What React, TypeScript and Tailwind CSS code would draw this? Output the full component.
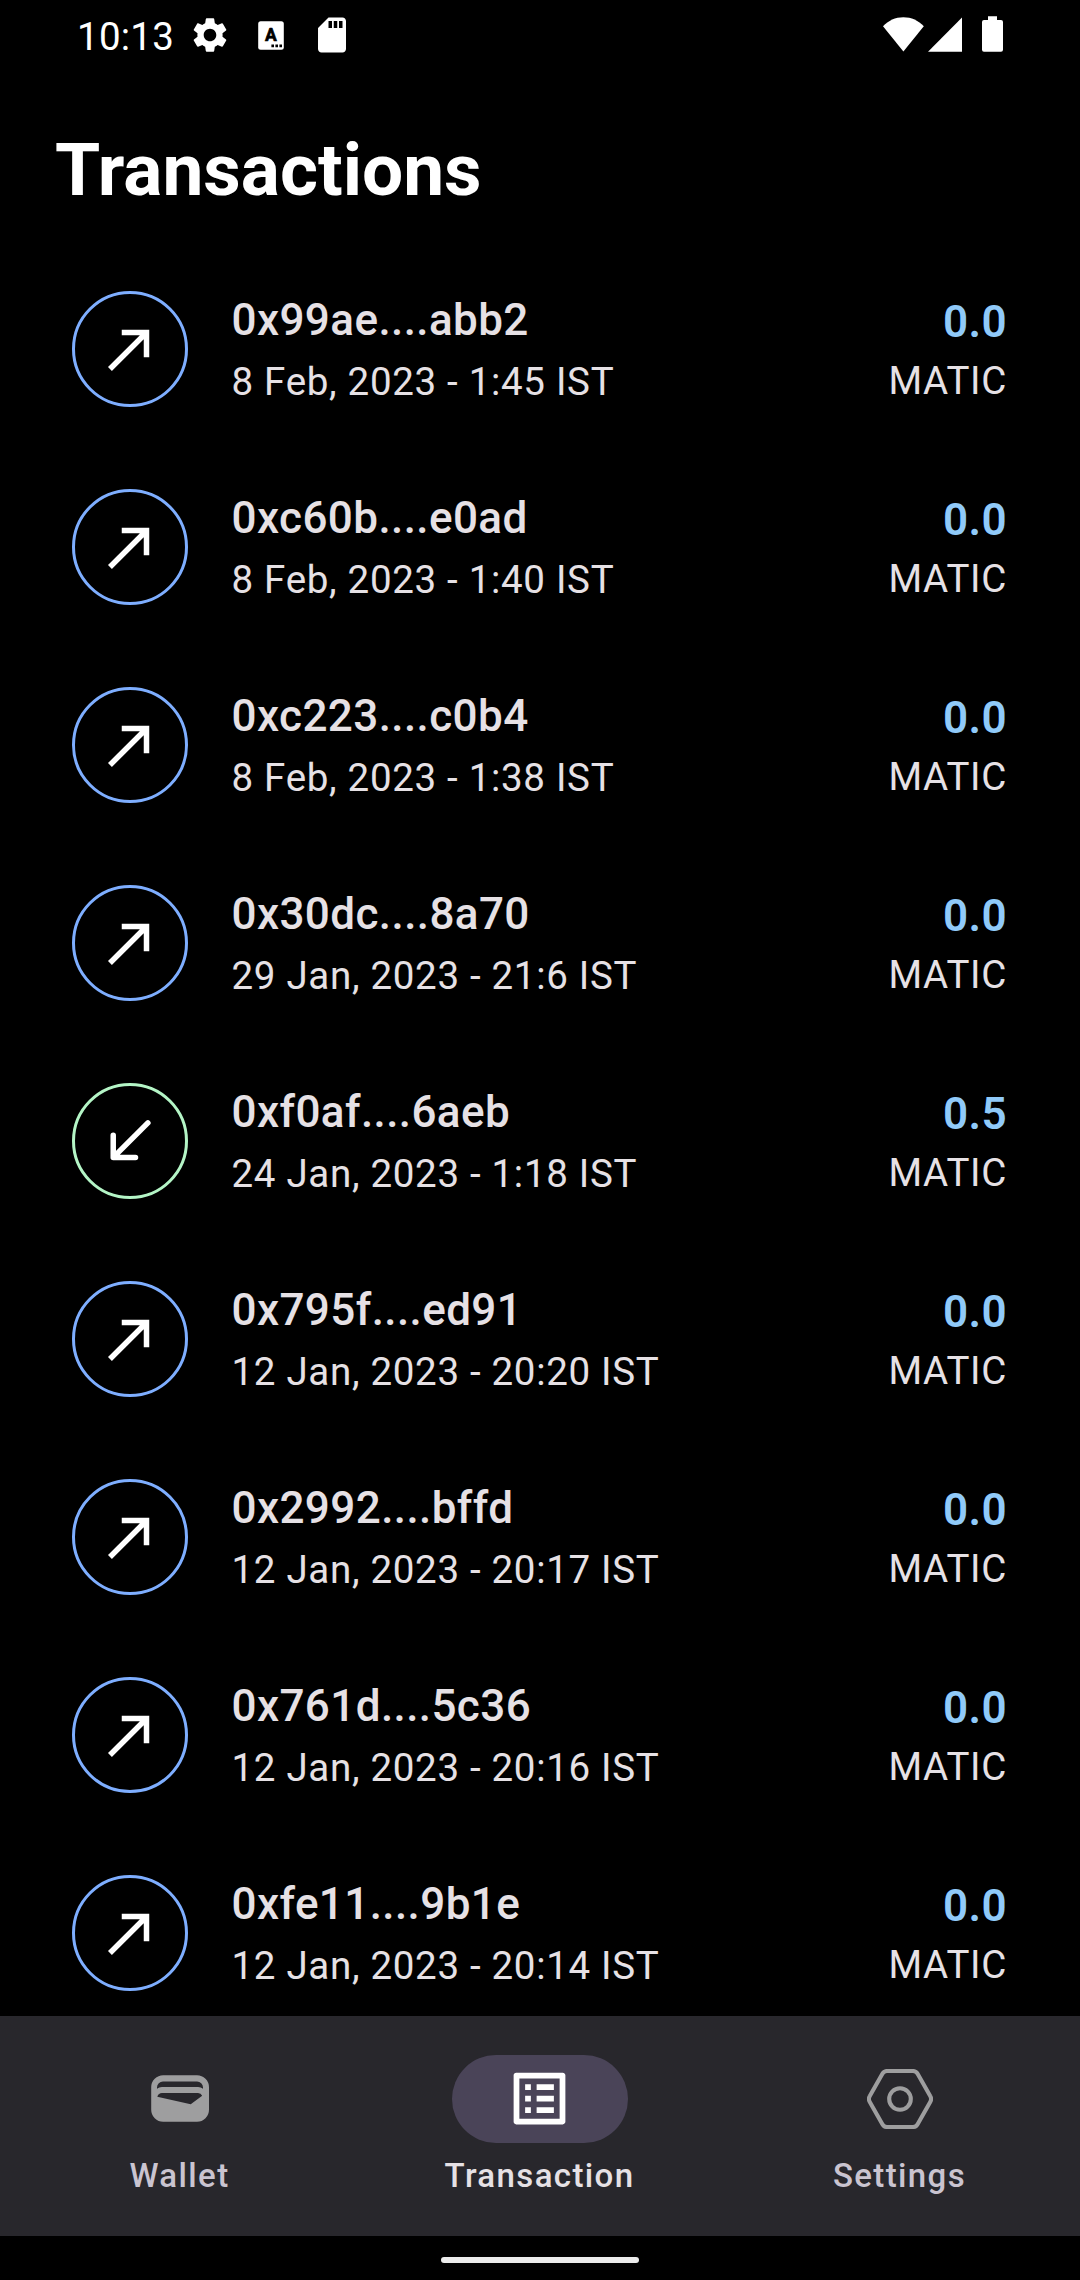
import type { ReactNode } from "react";
import { MdSettings, MdSdCard } from "react-icons/md";

type Tx = { address: string; date: string; amount: string; incoming?: boolean };

const transactions: Tx[] = [
  { address: "0x99ae....abb2", date: "8 Feb, 2023 - 1:45 IST", amount: "0.0" },
  { address: "0xc60b....e0ad", date: "8 Feb, 2023 - 1:40 IST", amount: "0.0" },
  { address: "0xc223....c0b4", date: "8 Feb, 2023 - 1:38 IST", amount: "0.0" },
  { address: "0x30dc....8a70", date: "29 Jan, 2023 - 21:6 IST", amount: "0.0" },
  { address: "0xf0af....6aeb", date: "24 Jan, 2023 - 1:18 IST", amount: "0.5", incoming: true },
  { address: "0x795f....ed91", date: "12 Jan, 2023 - 20:20 IST", amount: "0.0" },
  { address: "0x2992....bffd", date: "12 Jan, 2023 - 20:17 IST", amount: "0.0" },
  { address: "0x761d....5c36", date: "12 Jan, 2023 - 20:16 IST", amount: "0.0" },
  { address: "0xfe11....9b1e", date: "12 Jan, 2023 - 20:14 IST", amount: "0.0" },
];

function KeyboardIcon() {
  return (
    <svg width="26" height="29" viewBox="0 0 26 29">
      <rect x="0.2" y="0.2" width="25.6" height="28.6" rx="2.5" fill="#fff" />
      <text
        x="13"
        y="19.6"
        textAnchor="middle"
        fontFamily="Roboto, sans-serif"
        fontWeight="700"
        fontSize="17.5"
        stroke="#000"
        strokeWidth="0.7"
        strokeLinejoin="round"
      >
        A
      </text>
      <path d="M13.4 23.6h2.6v2.6h-2.6zM17.4 23.6h2.6v2.6h-2.6zM21.4 23.6h2.6v2.6h-2.6z" />
    </svg>
  );
}

function StatusBar() {
  return (
    <div className="flex h-[72px] shrink-0 items-start justify-between pl-[77px] pr-[77px] text-white">
      <div className="flex">
        <span className="mt-[9px] w-[112px] text-[38.5px] leading-[55px] tracking-[0.25px]">10:13</span>
        <MdSettings className="mt-[14px] size-[42px]" />
        <span className="ml-[27px] mt-[21px]">
          <KeyboardIcon />
        </span>
        <MdSdCard className="ml-[27px] mt-[14px] size-[42px]" />
      </div>
      <div className="flex">
        <svg className="mt-[17px]" width="42" height="35" viewBox="0 0 42 35" fill="currentColor">
          <path d="M21.4 34.6 1 9.3C6.300 3.400 13.400 0.200 21.400 0.200S36.500 3.400 41.800 9.300Z" />
        </svg>
        <svg className="ml-[4px] mt-[17px]" width="35" height="35" viewBox="0 0 35 35" fill="currentColor">
          <path d="M34 0.600V34.700H0Z" />
        </svg>
        <svg className="ml-[19px] mt-[16px]" width="21" height="36" viewBox="0 0 21 36" fill="currentColor">
          <path d="M6 0.300h9V4h4a2 2 0 0 1 2 2v27.700a2 2 0 0 1-2 2H2a2 2 0 0 1-2-2V6a2 2 0 0 1 2-2h4Z" />
        </svg>
      </div>
    </div>
  );
}

function OutgoingArrow() {
  return (
    <svg width="66" height="66" viewBox="0 0 24 24" fill="#fff">
      <path d="M9 5v2h6.590L4 18.590 5.410 20 17 8.410V15h2V5z" />
    </svg>
  );
}

function IncomingArrow() {
  return (
    <svg
      width="66"
      height="66"
      viewBox="0 0 24 24"
      fill="none"
      stroke="#fff"
      strokeWidth="2"
      strokeLinecap="round"
      strokeLinejoin="round"
    >
      <path d="M5.900 9.900V18H14M6.300 17.600 18.500 5.400" />
    </svg>
  );
}

function Row({ tx }: { tx: Tx }) {
  return (
    <li className="flex h-[198px] shrink-0 items-start pl-[72px] pr-[73px]">
      <div
        className={`mt-[41px] flex size-[116px] items-center justify-center rounded-full border-[3px] ${
          tx.incoming ? "border-[#b4f5c6]" : "border-[#7eaeff]"
        }`}
      >
        {tx.incoming ? <IncomingArrow /> : <OutgoingArrow />}
      </div>
      <div className="ml-[43.5px] mt-[37px] flex-1 text-[#e6e1e5]">
        <p className="text-[44px] font-medium leading-[66px] tracking-[0.41px]">{tx.address}</p>
        <p className="mt-px text-[38.5px] leading-[55px] tracking-[0.69px]">{tx.date}</p>
      </div>
      <div className="mt-[39px] text-right">
        <p className="text-[44px] font-semibold leading-[66px] tracking-[0.41px] text-[#90caf9]">{tx.amount}</p>
        <p className="text-[38.5px] leading-[51px] tracking-[0.69px] text-[#e6e1e5]">MATIC</p>
      </div>
    </li>
  );
}

function WalletIcon() {
  return (
    <svg width="58" height="47" viewBox="0 0 58 47" fill="#9e9e9f" fillRule="evenodd">
      <path d="M12 0.200H46a12 12 0 0 1 12 12V34.800a12 12 0 0 1-12 12H12.200a12 12 0 0 1-12-12V12.200a12 12 0 0 1 12-12ZM6 13.800Q8 12 11 12H47Q50 12 52 13.800V12.400a6 6 0 0 0-6-6H12a6 6 0 0 0-6 6ZM6.300 21.700 39.700 29.300 51.200 20.800Q50 18 47 18H11Q7.500 18 6.300 21.700Z" />
    </svg>
  );
}

function ListIcon() {
  return (
    <svg width="69" height="69" viewBox="0 0 24 24" fill="#fff">
      <path d="M19 5v14H5V5h14m1.100-2H3.900c-.5 0-.9.4-.9.9v16.200c0 .4.4.9.9.9h16.200c.4 0 .9-.5.9-.9V3.900c0-.5-.5-.9-.9-.9zM11 7h6v2h-6V7zm0 4h6v2h-6v-2zm0 4h6v2h-6zM7 7h2v2H7zm0 4h2v2H7zm0 4h2v2H7z" />
    </svg>
  );
}

function SettingsIcon() {
  return (
    <svg width="66" height="60" viewBox="0 0 66 60" fill="none" stroke="#9e9e9f" strokeWidth="4.100">
      <path d="M2.800 27 15.400 4.800Q17 2 20 2H46Q49 2 50.600 4.800L63.200 27Q65 30 63.200 33L50.600 55.200Q49 58 46 58H20Q17 58 15.400 55.200L2.800 33Q1 30 2.800 27Z" />
      <circle cx="33" cy="30" r="10.800" />
    </svg>
  );
}

function NavItem({ label, icon, active }: { label: string; icon: ReactNode; active?: boolean }) {
  return (
    <div className="flex w-[360px] flex-col items-center pt-[39px]">
      <div
        className={`flex h-[88px] w-[176px] items-center justify-center rounded-full pb-px pr-px ${
          active ? "bg-[#4a4458]" : ""
        }`}
      >
        {icon}
      </div>
      <span
        className={`mr-px mt-[10px] text-[33px] font-medium leading-[45px] tracking-[1.375px] ${
          active ? "text-[#e6e1e5]" : "text-[#cac4d0]"
        }`}
      >
        {label}
      </span>
    </div>
  );
}

export default function App() {
  return (
    <div className="flex h-[2280px] w-[1080px] flex-col overflow-hidden bg-black font-['Roboto',sans-serif]">
      <StatusBar />
      <h1 className="mb-[37px] ml-[55px] mt-[55px] shrink-0 text-[73px] font-bold leading-[86px] text-white">
        Transactions
      </h1>
      <ul className="flex min-h-0 flex-1 flex-col overflow-hidden">
        {transactions.map((tx) => (
          <Row key={tx.address} tx={tx} />
        ))}
      </ul>
      <nav className="flex h-[220px] shrink-0 bg-[#28272c]">
        <NavItem label="Wallet" icon={<WalletIcon />} />
        <NavItem label="Transaction" icon={<ListIcon />} active />
        <NavItem label="Settings" icon={<SettingsIcon />} />
      </nav>
      <div className="flex h-[44px] shrink-0 justify-center pt-[21px]">
        <div className="h-[6px] w-[198px] rounded-full bg-[#ececec]" />
      </div>
    </div>
  );
}
